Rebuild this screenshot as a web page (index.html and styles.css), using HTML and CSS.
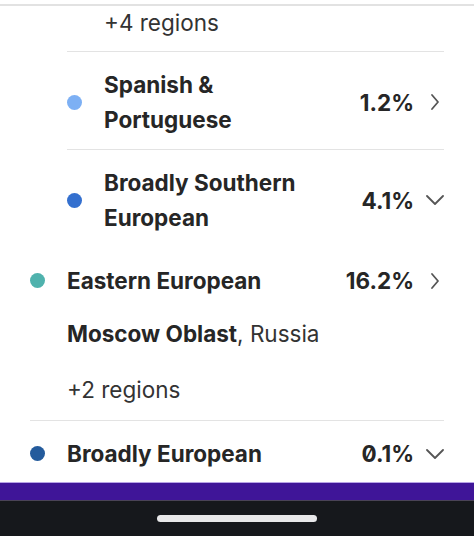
FILE: index.html
```html
<!DOCTYPE html>
<html>
<head>
<meta charset="utf-8">
<link rel="stylesheet" href="styles.css">
</head>
<body>
<div class="screen">
  <div class="content">
    <div class="topline"></div>
    <div class="list">
      <div class="sub">
        <div class="more more-top">+4 regions</div>
        <div class="row row-sub row-div">
          <span class="dot" style="background:#7db0f4"></span>
          <span class="name">Spanish &amp;<br>Portuguese</span>
          <span class="pct">1.2%</span>
          <svg class="chev" viewBox="0 0 18 18"><path d="M6 2 L12 9 L6 16"/></svg>
        </div>
        <div class="row row-sub row-div row-bs">
          <span class="dot" style="background:#3470cf"></span>
          <span class="name">Broadly Southern<br>European</span>
          <span class="pct">4.1%</span>
          <svg class="chev" viewBox="0 0 18 18"><path d="M1 5 L9 13 L17 5"/></svg>
        </div>
      </div>
      <div class="row row-main row-ee">
        <span class="dot" style="background:#4fb2ad"></span>
        <span class="name">Eastern European</span>
        <span class="pct">16.2%</span>
        <svg class="chev" viewBox="0 0 18 18"><path d="M6 2 L12 9 L6 16"/></svg>
      </div>
      <div class="region"><b>Moscow Oblast</b>, Russia</div>
      <div class="more more-bottom">+2 regions</div>
      <div class="row row-main row-div row-be">
        <span class="dot" style="background:#245b9c"></span>
        <span class="name">Broadly European</span>
        <span class="pct">0.1%</span>
        <svg class="chev" viewBox="0 0 18 18"><path d="M1 5 L9 13 L17 5"/></svg>
      </div>
    </div>
  </div>
  <div class="purple"></div>
  <div class="navbar"><div class="home"></div></div>
</div>
</body>
</html>
```
FILE: styles.css
```css
* { box-sizing: border-box; }
html, body { margin: 0; padding: 0; background: #fff; }
.screen {
  width: 474px;
  height: 536px;
  overflow: hidden;
  display: flex;
  flex-direction: column;
  font-family: Inter, "Liberation Sans", sans-serif;
  font-feature-settings: "zero" 1;
  color: #2a2a2a;
}
.content { height: 482px; overflow: hidden; }
.topline {
  margin-top: 4px;
  height: 2px;
  background: #e2e2e2;
}
.list { padding: 0 30px; }
.sub { padding-left: 37px; }
.row {
  display: flex;
  align-items: center;
  font-weight: 700;
  font-size: 22.5px;
  line-height: 35px;
  color: #262626;
}
.row-div { border-top: 1px solid #e3e3e3; }
.dot {
  width: 15px;
  height: 15px;
  border-radius: 50%;
  flex: none;
  margin-right: 22px;
}
.name { flex: 1; }
.pct { margin-right: 12px; }
.chev {
  width: 18px;
  height: 18px;
  flex: none;
}
.chev path {
  fill: none;
  stroke: #555;
  stroke-width: 1.8;
  stroke-linecap: round;
  stroke-linejoin: round;
}
.more {
  font-size: 22.5px;
  line-height: 28px;
  color: #333;
}
.more-top { padding: 3px 0 14px 37px; }
.row-sub { padding: 15px 0 12px; }
.row-bs { padding-bottom: 13px; }
.row-ee { padding: 15px 0 0; height: 50px; }
.region {
  font-size: 22.5px;
  line-height: 35px;
  padding: 18px 0 0 37px;
  color: #333;
}
.region b { color: #262626; }
.more-bottom { padding: 25px 0 16px 37px; }
.row-be { padding: 15px 0 7px; }
.purple {
  height: 19px;
  background: #3f1598;
  border-top: 1px solid #b7a3e6;
  border-bottom: 1px solid #4a4356;
}
.navbar {
  flex: 1;
  background: #16181c;
  display: flex;
  justify-content: center;
  padding-top: 14px;
}
.home {
  width: 160px;
  height: 7px;
  border-radius: 4px;
  background: #e8e8ea;
}
```
